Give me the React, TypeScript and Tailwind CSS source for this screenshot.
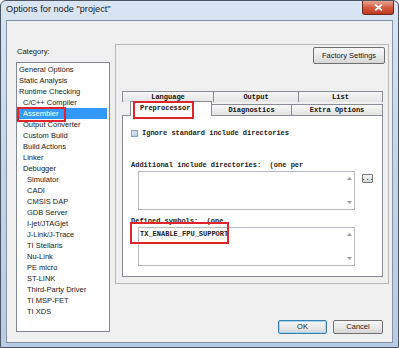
import React from 'react';

const categories: [string, number][] = [
  ['General Options', 0],
  ['Static Analysis', 0],
  ['Runtime Checking', 0],
  ['C/C++ Compiler', 1],
  ['Assembler', 1],
  ['Output Converter', 1],
  ['Custom Build', 1],
  ['Build Actions', 1],
  ['Linker', 1],
  ['Debugger', 1],
  ['Simulator', 2],
  ['CADI', 2],
  ['CMSIS DAP', 2],
  ['GDB Server', 2],
  ['I-jet/JTAGjet', 2],
  ['J-Link/J-Trace', 2],
  ['TI Stellaris', 2],
  ['Nu-Link', 2],
  ['PE micro', 2],
  ['ST-LINK', 2],
  ['Third-Party Driver', 2],
  ['TI MSP-FET', 2],
  ['TI XDS', 2],
];

const indent = ['pl-[2px]', 'pl-[6px]', 'pl-[10px]'];

function Arrows() {
  return (
    <div className="flex flex-col justify-between items-center w-[10px] py-[5px]">
      <svg width="5" height="3" viewBox="0 0 5 3"><path d="M0 3 L2.5 0 L5 3Z" fill="#9a9a9a" /></svg>
      <svg width="5" height="3" viewBox="0 0 5 3"><path d="M0 0 L2.5 3 L5 0Z" fill="#9a9a9a" /></svg>
    </div>
  );
}

function WinButton({ label, className }: { label: string; className: string }) {
  return (
    <div className={`flex items-center justify-center rounded-[2px] border bg-gradient-to-b from-[#f6f6f6] via-[#ebebeb] to-[#d6d6d6] text-[7.5px] text-[#1a1a1a] ${className}`}>
      {label}
    </div>
  );
}

export default function App() {
  return (
    <div className="w-[399px] h-[348px] bg-white font-['Liberation_Sans',Arial,sans-serif]">
      <div className="w-[399px] h-[348px] flex flex-col rounded-t-[6px] border border-[#4b5563] bg-gradient-to-b from-[#d9e5f3] via-[#c3d4ea] to-[#b7cbe4]">
        {/* title bar */}
        <div className="h-[19px] flex items-start justify-between shrink-0">
          <div className="pl-[5px] pt-[3px] text-[9.2px] leading-[11px] text-[#1c1c1c]">Options for node "project"</div>
          <div className="mr-[4px] w-[32px] h-[14px] rounded-b-[3px] border border-t-0 border-[#6b2a1e] bg-gradient-to-b from-[#e9a393] via-[#d45a40] to-[#c0391f] flex items-center justify-center">
            <svg width="9" height="7" viewBox="0 0 9 7">
              <path d="M1 0.5 L8 6.5 M8 0.5 L1 6.5" stroke="#fff" strokeWidth="1.8" />
            </svg>
          </div>
        </div>

        {/* client area */}
        <div className="mx-[5px] mb-[4px] flex-1 border border-[#8794a8] bg-[#f0f0f0] flex">
          {/* left column */}
          <div className="pl-[9px] w-[103px] flex flex-col">
            <div className="mt-[26px] h-[9px] leading-[9px] pl-[1px] text-[7.5px] text-[#1a1a1a]">Category:</div>
            <div className="mt-[6px] h-[270px] border border-[#828790] bg-white pt-[1px] relative">
              {categories.map(([name, lvl]) => (
                <div key={name} className={`h-[11px] leading-[11px] text-[7.5px] ${indent[lvl]} ${name === 'Assembler' ? 'text-white' : 'text-[#1a1a1a]'}`}>
                  <div className={name === 'Assembler' ? 'bg-[#3399ff] -ml-[4px] pl-[4px] mr-[2px]' : ''}>{name}</div>
                </div>
              ))}
              <div className="absolute left-[0px] top-[44px] w-[49px] h-[15px] border-2 border-[#e0242c]" />
            </div>
          </div>

          {/* right column */}
          <div className="ml-[5px] w-[274px] flex flex-col">
            <div className="mt-[23px] h-[240px] border border-[#b9b9b9] flex flex-col">
              <div className="flex justify-end pr-[3px] pt-[2px]">
                <WinButton label="Factory Settings" className="w-[72px] h-[17px] border-[#707070]" />
              </div>

              {/* tabs */}
              <div className="mt-[27px] ml-[6px] w-[261px] relative font-['Liberation_Mono',monospace] text-[7px] font-bold text-[#111]">
                <div className="flex h-[11px]">
                  <div className="w-[92px] border border-b-0 border-[#898c95] bg-gradient-to-b from-[#f7f7f7] to-[#e3e3e3] flex items-center justify-center">Language</div>
                  <div className="w-[85px] border border-b-0 border-l-0 border-[#898c95] bg-gradient-to-b from-[#f7f7f7] to-[#e3e3e3] flex items-center justify-center">Output</div>
                  <div className="flex-1 border border-b-0 border-l-0 border-[#898c95] bg-gradient-to-b from-[#f7f7f7] to-[#e3e3e3] flex items-center justify-center">List</div>
                </div>
                <div className="flex items-end h-[13px] pl-[8px]">
                  <div className="w-[82px] h-[15px] relative top-[1px] z-10 border border-b-0 border-[#898c95] bg-white flex items-center pl-[9px] pb-[1px]">Preprocessor</div>
                  <div className="w-[80px] h-[11px] border border-b-0 border-l-0 border-[#898c95] bg-gradient-to-b from-[#f7f7f7] to-[#e3e3e3] flex items-center justify-center">Diagnostics</div>
                  <div className="flex-1 h-[11px] border border-b-0 border-l-0 border-[#898c95] bg-gradient-to-b from-[#f7f7f7] to-[#e3e3e3] flex items-center justify-center">Extra Options</div>
                </div>
                <div className="absolute left-[11px] top-[10px] w-[61px] h-[18px] border-2 border-[#e0242c] z-20" />

                {/* panel */}
                <div className="h-[162px] border border-[#898c95] bg-white pl-[8px] text-[#222]">
                  <div className="mt-[14px] h-[7px] flex items-center gap-[4px]">
                    <div className="w-[7px] h-[7px] border border-[#8e9fb8] bg-gradient-to-br from-[#dfe9f5] to-[#b9cde5]" />
                    <span>Ignore standard include directories</span>
                  </div>
                  <div className="mt-[24px] h-[8px] leading-[8px] whitespace-pre">Additional include directories:  (one per</div>
                  <div className="mt-[2px] flex items-start">
                    <div className="ml-[7px] w-[217px] h-[39px] border border-[#b5b8be] bg-white flex justify-end">
                      <Arrows />
                    </div>
                    <div className="ml-[7px] mt-[3px] w-[11px] h-[9px] rounded-[1px] border border-[#7a7a7a] bg-gradient-to-b from-[#f6f6f6] to-[#d8d8d8] flex items-start justify-center leading-[6px] text-[7px] font-normal">...</div>
                  </div>
                  <div className="mt-[7px] h-[8px] leading-[8px] whitespace-pre">Defined symbols:  (one</div>
                  <div className="mt-[2px] ml-[7px] w-[217px] h-[39px] border border-[#b5b8be] bg-white flex justify-between relative">
                    <div className="pl-[1px] pt-[2px] h-[8px] leading-[8px] whitespace-pre">TX_ENABLE_FPU_SUPPORT</div>
                    <Arrows />
                    <div className="absolute -left-[9px] -top-[6px] w-[99px] h-[22px] border-2 border-[#e0242c]" />
                  </div>
                </div>
              </div>
            </div>

            <div className="mt-[36px] flex justify-end gap-[6px] pr-[6px]">
              <WinButton label="OK" className="w-[49px] h-[14px] border-[#3c7fb1] shadow-[inset_0_0_0_1px_#9fd5f5]" />
              <WinButton label="Cancel" className="w-[50px] h-[14px] border-[#707070]" />
            </div>
          </div>
        </div>
      </div>
    </div>
  );
}
